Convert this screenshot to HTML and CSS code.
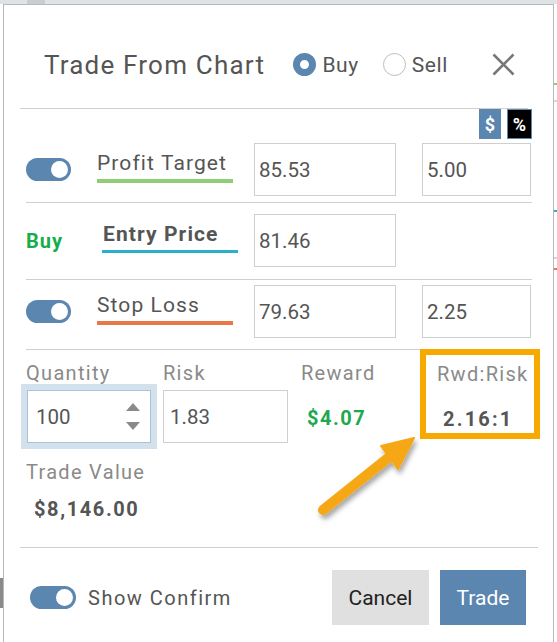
FILE: index.html
```html
<!DOCTYPE html>
<html>
<head>
<meta charset="utf-8">
<link rel="stylesheet" href="styles.css">
</head>
<body>
<div class="topbar"><span class="tab"></span></div>
<div class="chart-edge">
  <span class="tick t-green"></span>
  <span class="tick t-grey1"></span>
  <span class="tick t-cyan"></span>
  <span class="tick t-grey2"></span>
  <span class="tick t-orange"></span>
</div>
<span class="left-stub"></span>
<div class="dialog">
  <header class="head">
    <h1 class="title">Trade From Chart</h1>
    <div class="radios">
      <label class="radio on"><span class="dot"></span>Buy</label>
      <label class="radio"><span class="dot"></span>Sell</label>
    </div>
    <button class="close" aria-label="Close">
      <svg width="23" height="23" viewBox="0 0 23 23"><path d="M1.5 1.5 L21.5 21.5 M21.5 1.5 L1.5 21.5" stroke="#777" stroke-width="2.6" fill="none"/></svg>
    </button>
  </header>

  <div class="units">
    <span class="unit dollar">$</span>
    <span class="unit pct">%</span>
  </div>

  <div class="row r1">
    <span class="toggle"></span>
    <span class="lbl lbl-green">Profit Target</span>
    <div class="inp">85.53</div>
    <span></span>
    <div class="inp">5.00</div>
  </div>

  <div class="row r2">
    <span class="side-buy">Buy</span>
    <span class="lbl lbl-cyan">Entry Price</span>
    <div class="inp">81.46</div>
  </div>

  <div class="row r3">
    <span class="toggle"></span>
    <span class="lbl lbl-orange">Stop Loss</span>
    <div class="inp">79.63</div>
    <span></span>
    <div class="inp">2.25</div>
  </div>

  <div class="stats">
    <div class="col">
      <div class="slabel">Quantity</div>
      <div class="qty">
        <span>100</span>
        <svg class="spin" width="14" height="28" viewBox="0 0 14 28"><path d="M7 0 L14 8 L0 8 Z" fill="#8a8a8a"/><path d="M0 19 L14 19 L7 27 Z" fill="#8a8a8a"/></svg>
      </div>
    </div>
    <div class="col">
      <div class="slabel">Risk</div>
      <div class="inp risk">1.83</div>
    </div>
    <div class="col">
      <div class="slabel">Reward</div>
      <div class="sval green">$4.07</div>
    </div>
    <div class="col ratio">
      <div class="slabel">Rwd:Risk</div>
      <div class="sval dark ratioval">2.16:1</div>
    </div>
  </div>

  <div class="tv">
    <div class="slabel">Trade Value</div>
    <div class="sval dark tvval">$8,146.00</div>
  </div>

  <footer class="foot">
    <span class="toggle"></span>
    <span class="confirm">Show Confirm</span>
    <button class="btn cancel">Cancel</button>
    <button class="btn trade">Trade</button>
  </footer>
</div>

<svg class="arrow" width="140" height="110" viewBox="300 425 140 110">
  <defs>
    <filter id="sh" x="-30%" y="-30%" width="160%" height="160%">
      <feDropShadow dx="2" dy="4" stdDeviation="2.5" flood-color="#000" flood-opacity="0.35"/>
    </filter>
  </defs>
  <g filter="url(#sh)">
    <path d="M323 510 L388 458" stroke="#f6a714" stroke-width="10" stroke-linecap="round" fill="none"/>
    <path d="M414 438 L381 446 L398 469 Z" fill="#f6a714" stroke="#f6a714" stroke-width="2" stroke-linejoin="round"/>
  </g>
</svg>
</body>
</html>
```

FILE: styles.css
```css
html, body {
  margin: 0;
  padding: 0;
}
body {
  width: 557px;
  height: 642px;
  overflow: hidden;
  position: relative;
  background: #ffffff;
  font-family: Roboto, "Liberation Sans", sans-serif;
  color: #555;
}

.topbar {
  height: 4px;
  background: #dfe3e5;
  position: relative;
}
.tab {
  position: absolute;
  left: 27px;
  top: 0;
  width: 18px;
  height: 4px;
  background: #c9cdd0;
}

.chart-edge {
  position: absolute;
  left: 554px;
  top: 4px;
  width: 3px;
  height: 638px;
}
.tick {
  position: absolute;
  left: 0;
  width: 3px;
  height: 2px;
}
.t-green { top: 79px; background: #8fce74; }
.t-grey1 { top: 96px; background: #d8d8d8; }
.t-cyan { top: 206px; background: #2ab0c8; }
.t-grey2 { top: 253px; background: #d8d8d8; }
.t-orange { top: 264px; background: #e8784a; }

.left-stub {
  position: absolute;
  left: 0;
  top: 578px;
  width: 3px;
  height: 30px;
  background: #8a8a8a;
}

.dialog {
  margin-left: 3px;
  width: 551px;
  height: 638px;
  box-sizing: border-box;
  border: 1px solid #b8b8b8;
  border-bottom: none;
  background: #fff;
  display: flex;
  flex-direction: column;
}

/* header */
.head {
  height: 104px;
  box-sizing: border-box;
  margin: 0 25px 0 16px;
  padding-top: 16px;
  border-bottom: 1px solid #cfcfcf;
  display: flex;
  align-items: center;
}
.title {
  margin: 0 0 0 24px;
  font-size: 26px;
  font-weight: 400;
  letter-spacing: 1.2px;
  color: #555;
  line-height: 30px;
}
.radios {
  margin-left: auto;
  display: flex;
  align-items: center;
  gap: 24px;
}
.radio {
  display: flex;
  align-items: center;
  gap: 6px;
  font-size: 21px;
  letter-spacing: 0.6px;
  color: #555;
}
.dot {
  width: 23px;
  height: 23px;
  box-sizing: border-box;
  border-radius: 50%;
  border: 1px solid #bdbdbd;
  background: #fff;
}
.radio.on .dot {
  border: 7px solid #5a86b0;
}
.close {
  margin: 0 13px 0 44px;
  padding: 0;
  border: none;
  background: none;
  width: 23px;
  height: 23px;
  display: flex;
}

/* units */
.units {
  height: 30px;
  margin-right: 21px;
  display: flex;
  justify-content: flex-end;
  align-items: flex-start;
  gap: 6px;
}
.unit {
  height: 30px;
  box-sizing: border-box;
  display: flex;
  align-items: center;
  justify-content: center;
  font-size: 18px;
  font-weight: 700;
  color: #fff;
}
.dollar {
  width: 22px;
  background: #5a86b0;
}
.pct {
  width: 25px;
  background: #000;
  border: 1px solid #5a86b0;
}

/* rows */
.row {
  margin: 0 21px 0 22px;
  display: grid;
  grid-template-columns: 71px 157px 142px 26px 109px;
  align-items: start;
  border-bottom: 1px solid #cfcfcf;
}
.r1 { padding: 4px 0 6px; }
.r2 { padding: 11px 0 12px; }
.r3 { padding: 5px 0 11px; }

.toggle {
  align-self: center;
  width: 45px;
  height: 23px;
  border-radius: 12px;
  background: #5a86b0;
  position: relative;
}
.toggle::after {
  content: "";
  position: absolute;
  right: 3px;
  top: 3px;
  width: 17px;
  height: 17px;
  border-radius: 50%;
  background: #fff;
}

.lbl {
  margin-top: 8px;
  width: 136px;
  box-sizing: border-box;
  font-size: 21px;
  line-height: 24px;
  letter-spacing: 1.1px;
  color: #555;
  padding-bottom: 4px;
  border-bottom: 4px solid;
  white-space: nowrap;
}
.lbl-green { border-color: #8fce74; }
.lbl-cyan {
  border-color: #2ab0c8;
  border-bottom-width: 3px;
  font-weight: 700;
  margin-left: 5px;
  padding-left: 1px;
}
.lbl-orange { border-color: #e8784a; }

.side-buy {
  align-self: center;
  font-size: 20px;
  font-weight: 700;
  letter-spacing: 1px;
  color: #16ae4a;
}

.inp {
  height: 53px;
  box-sizing: border-box;
  border: 1px solid #cfcfcf;
  padding-left: 4px;
  display: flex;
  align-items: center;
  font-size: 20.5px;
  color: #555;
}

/* stats */
.stats {
  margin: 0 13px 0 22px;
  display: grid;
  grid-template-columns: 137px 138px 119px 120px;
  align-items: start;
}
.slabel {
  font-size: 20px;
  line-height: 24px;
  letter-spacing: 1.3px;
  color: #8a8a8a;
  white-space: nowrap;
}
.col > .slabel {
  margin-top: 11px;
}
.qty {
  margin: 5px 0 0 1px;
  width: 124px;
  height: 53px;
  box-sizing: border-box;
  border: 1px solid #a9c3da;
  box-shadow: 0 0 0 6px #d3e1ec;
  display: flex;
  align-items: center;
  justify-content: space-between;
  padding: 0 10px 0 8px;
  font-size: 20.5px;
  color: #555;
}
.spin {
  display: block;
}
.risk {
  margin-top: 5px;
  width: 125px;
  padding-left: 6px;
}
.sval {
  margin-top: 21px;
  font-size: 20px;
  line-height: 24px;
  font-weight: 700;
  letter-spacing: 1.5px;
  white-space: nowrap;
}
.green {
  color: #1fa84e;
  padding-left: 6px;
}
.dark {
  color: #555;
}
.ratio {
  margin-top: -1px;
  height: 90px;
  box-sizing: border-box;
  border: 6px solid #f7a900;
  padding: 7px 0 0 11px;
}
.ratio > .slabel {
  margin-top: 0;
}
.ratioval {
  padding-left: 6px;
  letter-spacing: 2.2px;
}

.tv {
  margin: 17px 0 0 22px;
}
.tvval {
  margin-top: 13px;
  padding-left: 8px;
  letter-spacing: 1.6px;
}

/* footer */
.foot {
  margin: 26px 15px 0 16px;
  border-top: 1px solid #cfcfcf;
  padding-top: 22px;
  display: flex;
  align-items: center;
}
.foot .toggle {
  margin-left: 10px;
  width: 46px;
  height: 23px;
}
.confirm {
  margin-left: 12px;
  font-size: 20px;
  letter-spacing: 1.5px;
  color: #555;
}
.btn {
  height: 55px;
  border: none;
  font-family: Roboto, "Liberation Sans", sans-serif;
  font-size: 21px;
  padding: 0;
}
.cancel {
  margin-left: auto;
  width: 97px;
  background: #e0e0e0;
  color: #222;
}
.trade {
  margin-left: 11px;
  margin-right: 12px;
  width: 86px;
  background: #5a86b0;
  color: #fff;
}

.arrow {
  position: absolute;
  left: 300px;
  top: 425px;
}
```
